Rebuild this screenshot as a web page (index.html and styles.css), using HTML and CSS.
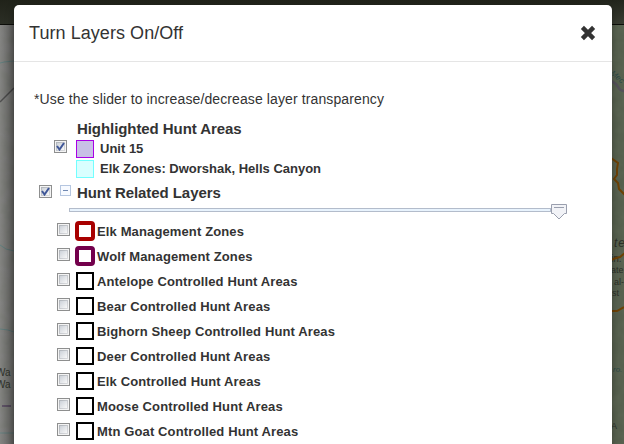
FILE: index.html
```html
<!DOCTYPE html>
<html lang="en">
<head>
<meta charset="utf-8">
<title>Turn Layers On/Off</title>
<link rel="stylesheet" href="styles.css">
</head>
<body>
<svg class="map" width="624" height="444" viewBox="0 0 624 444" aria-hidden="true">
  <defs>
    <linearGradient id="bar" x1="0" y1="0" x2="0" y2="1"><stop offset="0" stop-color="#202219"/><stop offset="1" stop-color="#2c2f26"/></linearGradient>
    <linearGradient id="barRight" x1="0" y1="0" x2="0" y2="1"><stop offset="0" stop-color="#22251c"/><stop offset="1" stop-color="#393d32"/></linearGradient>
    <linearGradient id="shade"><stop offset="0" stop-color="#000" stop-opacity="0"/><stop offset="1" stop-color="#000" stop-opacity=".32"/></linearGradient>
    <filter id="relief" x="0" y="0" width="1" height="1"><feTurbulence type="fractalNoise" baseFrequency=".09" numOctaves="3" seed="4"/><feColorMatrix values="0 0 0 0 .12  0 0 0 0 .15  0 0 0 0 .1  .9 0 0 0 -.3"/></filter>
  </defs>
  <rect width="14" height="444" fill="#858583"/>
  <rect x="612" width="12" height="444" fill="#56604e"/>
  <rect x="612" y="25" width="12" height="419" filter="url(#relief)"/>
  <rect y="25" width="14" height="419" filter="url(#relief)" opacity=".35"/>
  <path d="M0 102 14 88" stroke="#505050" stroke-width="1.5"/>
  <path d="M0 63 4 62 14 61M0 245l6 4 8 2M0 329l8 1 6 2M0 433h14" stroke="#648080" fill="none"/>
  <path d="M2 406h9" stroke="#62566a" stroke-width="2"/>
  <rect y="25" width="14" height="419" fill="url(#shade)"/>
  <path d="M611 81q5 2 7 6t7 4" stroke="#55515a" stroke-width="2.5" fill="none"/>
  <g class="map-label">
    <text x="-4" y="376">Wa</text><text x="-4" y="388">Wa</text>
    <text x="614" y="247" font-style="italic" font-size="12" letter-spacing="1">te</text>
    <text x="611" y="262">in.</text><text x="611" y="273" font-size="9">ate</text><text x="614" y="285" font-size="9">al-</text><text x="612" y="296" font-size="9">st</text>
    <text x="613" y="372" font-style="italic" font-size="8" class="river">ro.</text><text x="611" y="429" font-size="9">A</text>
    <text x="610" y="74" font-style="italic" font-size="8" class="river" transform="rotate(40 610 74)">Mec</text>
  </g>
  <path d="M611 158l7 5-1 6v6l-3 4 4 4 1 6 6 6M611 260l5-2 4-1 5-4M611 311l6 0 7-4" stroke="#6e4205" stroke-width="2" fill="none"/>
  <rect width="624" height="25" fill="url(#bar)"/>
  <rect x="600" width="24" height="25" fill="url(#barRight)"/>
  <path d="M0 24.5h624" stroke="#0c0d09"/>
</svg>
<main class="modal">
  <header class="modal-header">
    <h1>Turn Layers On/Off</h1>
    <svg class="close" width="16" height="16" viewBox="0 0 16 16"><path d="M2.4 2.4l11.2 11.2M13.6 2.4L2.4 13.6" stroke="#333" stroke-width="4.4"/></svg>
  </header>
  <p class="intro">*Use the slider to increase/decrease layer transparency</p>
  <section class="highlight">
    <span class="check"><svg width="9" height="9" viewBox="0 0 9 9"><path d="M1 4l2.5 3.5L8 1" fill="none" stroke="#3f5798" stroke-width="2"/></svg></span>
    <div>
      <h2>Highlighted Hunt Areas</h2>
      <div class="legend"><i class="swatch unit"></i><span>Unit 15</span></div>
      <div class="legend"><i class="swatch zones"></i><span>Elk Zones: Dworshak, Hells Canyon</span></div>
    </div>
  </section>
  <div class="group">
    <span class="check"><svg width="9" height="9" viewBox="0 0 9 9"><path d="M1 4l2.5 3.5L8 1" fill="none" stroke="#3f5798" stroke-width="2"/></svg></span>
    <span class="toggle"></span>
    <h2>Hunt Related Layers</h2>
  </div>
  <div class="slider"><span class="track"></span>
    <svg width="16" height="16" viewBox="0 0 16 16"><path d="M.5.5h15v9h-2L8 15 2.5 9.5h-2z" fill="#f2f3f7" stroke="#9a9fae"/><path d="M3 3.5h10" stroke="#9a9fae"/></svg>
  </div>
  <ul class="layers">
    <li><span class="check"></span><i class="swatch thick elk"></i><span>Elk Management Zones</span></li>
    <li><span class="check"></span><i class="swatch thick wolf"></i><span>Wolf Management Zones</span></li>
    <li><span class="check"></span><i class="swatch"></i><span>Antelope Controlled Hunt Areas</span></li>
    <li><span class="check"></span><i class="swatch"></i><span>Bear Controlled Hunt Areas</span></li>
    <li><span class="check"></span><i class="swatch"></i><span>Bighorn Sheep Controlled Hunt Areas</span></li>
    <li><span class="check"></span><i class="swatch"></i><span>Deer Controlled Hunt Areas</span></li>
    <li><span class="check"></span><i class="swatch"></i><span>Elk Controlled Hunt Areas</span></li>
    <li><span class="check"></span><i class="swatch"></i><span>Moose Controlled Hunt Areas</span></li>
    <li><span class="check"></span><i class="swatch"></i><span>Mtn Goat Controlled Hunt Areas</span></li>
  </ul>
</main>
</body>
</html>
```
FILE: styles.css
```css
* { box-sizing: border-box; }
body {
  margin: 0;
  height: 444px;
  overflow: hidden;
  padding: 5px 12px 0 14px;
  font-family: "Liberation Sans", Arial, sans-serif;
  color: #333;
}
h1, h2, p, ul { margin: 0; padding: 0; }
.map { position: absolute; inset: 0; z-index: -1; }
.map-label { font-size: 10px; fill: #2c3028; }
.river { fill: #2d4a46; }
.modal {
  height: 460px;
  background: #fff;
  border-radius: 5px 5px 0 0;
  box-shadow: 0 3px 8px rgba(0, 0, 0, .35);
}
.modal-header {
  display: flex;
  justify-content: space-between;
  height: 57px;
  padding: 16px 16px 0 15px;
  border-bottom: 1px solid #e5e5e5;
}
.modal-header h1 { font-size: 18px; line-height: 24px; font-weight: 400; letter-spacing: .06px; }
.close { margin-top: 4px; }
.intro { padding: 27px 0 0 20px; font-size: 14px; line-height: 20px; letter-spacing: .11px; }
h2 { font-size: 15px; line-height: 20px; letter-spacing: -.07px; }
.highlight { display: flex; gap: 9px; padding: 10px 0 0 40px; }
.highlight > .check { margin-top: 21px; }
.highlight h2 { padding-left: 1px; }
.legend {
  display: flex;
  align-items: center;
  gap: 6px;
  height: 20px;
  font-size: 13px;
  line-height: 18px;
  font-weight: 700;
}
.check {
  display: flex;
  align-items: center;
  justify-content: center;
  flex: none;
  width: 13px;
  height: 13px;
  border: 1px solid #8e8f8f;
  background: linear-gradient(135deg, #cdd2d9, #f8f8f8) center / 7px 7px no-repeat, linear-gradient(135deg, #aeb3b9, #dcdde0) center / 9px 9px no-repeat, #f4f4f4;
}
.swatch {
  flex: none;
  width: 18px;
  height: 18px;
  border: 2px solid #000;
}
.unit { border: 1px solid #a900e6; background: #c8c0e6; }
.zones { border: 1px solid #73ffff; background: #d9ffff; }
.group { display: flex; height: 25px; padding: 4px 0 0 25px; }
.group .check { margin-top: 2px; }
.toggle {
  width: 11px;
  height: 11px;
  margin: 2px 6px 0 8px;
  border: 1px solid #b5c6e0;
  background: linear-gradient(#7189b2, #7189b2) center / 5px 1px no-repeat, #f7faff;
}
.slider { display: flex; align-items: flex-start; height: 15px; padding-left: 55px; }
.track {
  width: 482px;
  height: 4px;
  margin-top: 4px;
  border: 1px solid #b3bccb;
  background: #e8f3fd;
}
.layers { list-style: none; font-size: 13px; font-weight: 700; letter-spacing: .13px; }
.layers li { display: flex; height: 25px; padding-left: 43px; line-height: 18px; }
.layers .check { margin-top: 4px; }
.layers .swatch { margin: 3px 3px 0 6px; }
.layers .thick { width: 20px; height: 20px; margin: 2px 2px 0 5px; border-width: 4px; border-radius: 4px; }
.layers .elk { border-color: #a80000; }
.layers .wolf { border-color: #73004c; }
.layers li > span:last-child { margin-top: 4px; }
```
